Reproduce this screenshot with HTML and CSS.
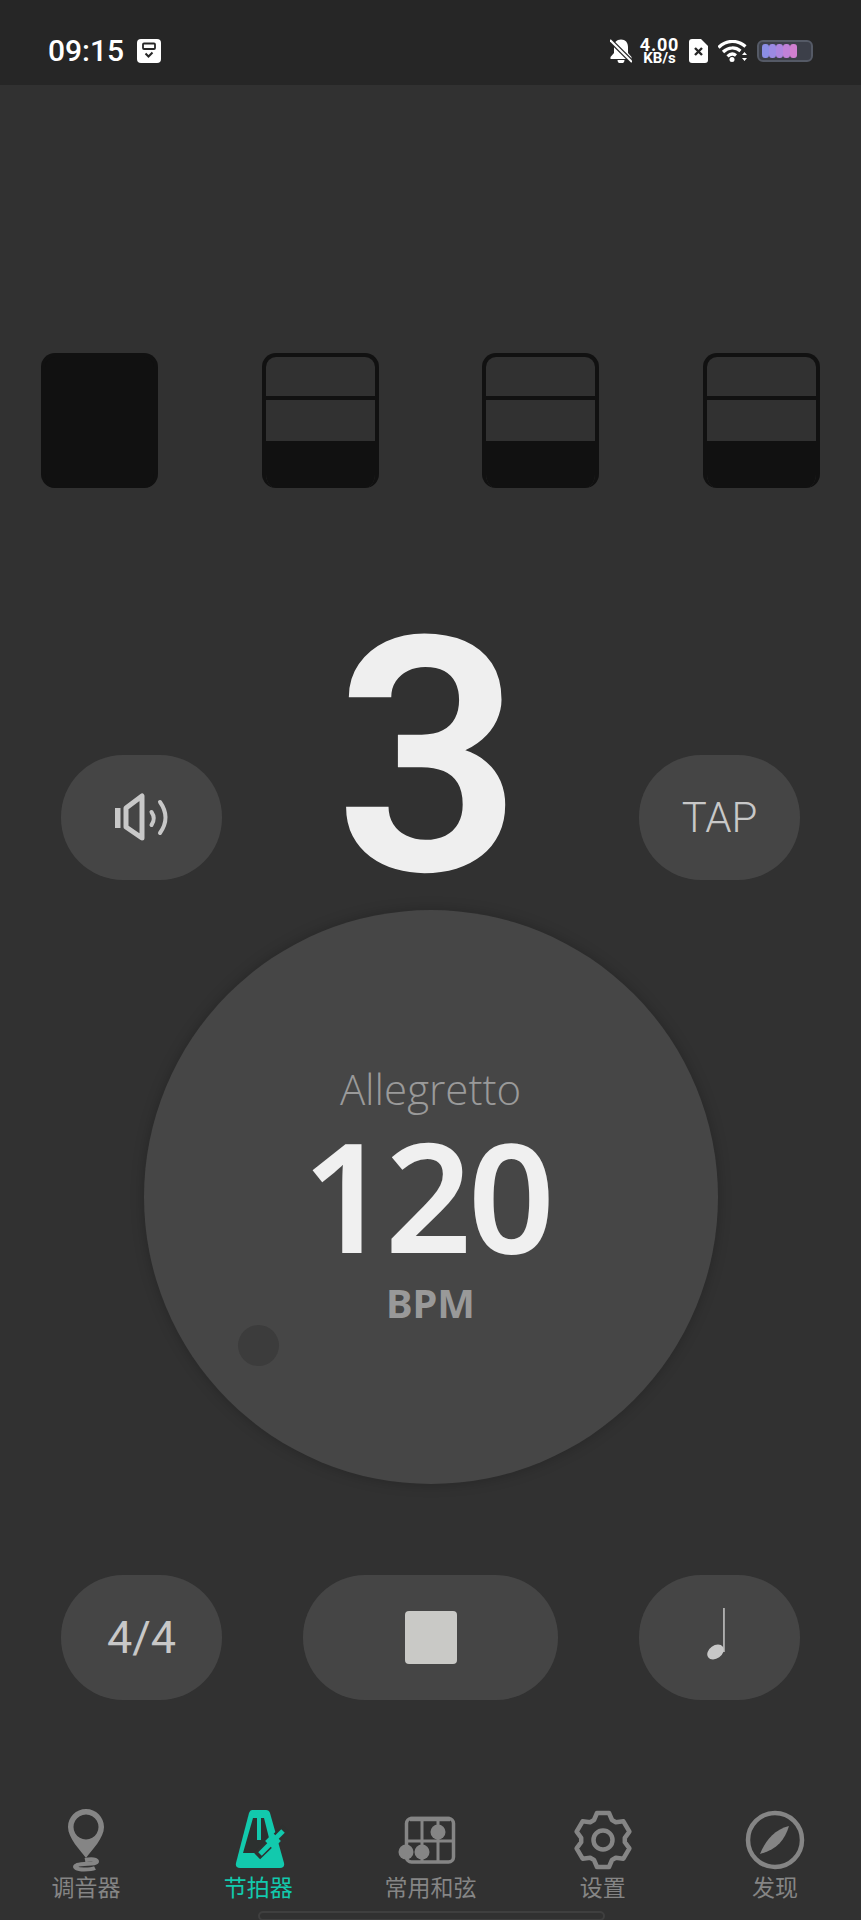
FILE: index.html
```html
<!DOCTYPE html>
<html lang="zh-CN">
<head>
  <meta charset="UTF-8">
  <title>节拍器</title>
  <link rel="stylesheet" href="styles.css">
</head>
<body>

<div class="status-bar">
  <div class="status-left">
    <span class="clock">09:15</span>
    <svg class="ic-cal" viewBox="0 0 24 24">
      <rect width="24" height="24" rx="4" fill="#fff"/>
      <rect x="6" y="4.500" width="12" height="5.500" rx="1" fill="none" stroke="#262626" stroke-width="1.800"/>
      <path d="M8.500 14.500l3 3 4-4" fill="none" stroke="#262626" stroke-width="2"/>
    </svg>
  </div>
  <div class="status-right">
    <svg class="ic-bell" viewBox="0 0 22 24">
      <path d="M11 0.500c-4.500 0-7 3-7 7.500v6L0.500 18v2h21v-2L18 14V8C18 3.500 15.500 0.500 11 0.500z" fill="#fff"/>
      <path d="M7.500 21h7a3.500 3.500 0 0 1-7 0z" fill="#fff"/>
      <path d="M-1 0L22 23" stroke="#262626" stroke-width="4.500"/>
      <path d="M0 1L22 23" stroke="#fff" stroke-width="2.200"/>
    </svg>
    <div class="speed">
      <span class="speed-num">4.00</span>
      <span class="speed-unit">KB/s</span>
    </div>
    <svg class="ic-sim" viewBox="0 0 19 24">
      <path d="M3 0h9l7 7v14a3 3 0 0 1-3 3H3a3 3 0 0 1-3-3V3a3 3 0 0 1 3-3z" fill="#fff"/>
      <path d="M6 9l7 7M13 9l-7 7" stroke="#262626" stroke-width="2.400"/>
    </svg>
    <svg class="ic-wifi" viewBox="0 0 29 22">
      <g fill="none" stroke="#fff" stroke-width="3.200">
        <path d="M0.500 7.500C8.500 -0.500 19.500 -0.500 27.500 6.500"/>
        <path d="M5 12C10.500 6.800 17.500 6.800 22.500 11"/>
        <path d="M9.500 16.300C12.500 13.500 15.500 13.500 18 15.500"/>
      </g>
      <circle cx="14" cy="19.500" r="2.500" fill="#fff"/>
      <path d="M24 15l2.500-3 2.500 3zM24 18l2.500 3 2.500-3z" fill="#fff"/>
    </svg>
    <div class="battery">
      <span class="cell c1"></span>
      <span class="cell c2"></span>
      <span class="cell c3"></span>
      <span class="cell c4"></span>
      <span class="cell c5"></span>
    </div>
  </div>
</div>

<div class="beats">
  <div class="beat full"></div>
  <div class="beat"><div class="beat-line"></div><div class="beat-fill"></div></div>
  <div class="beat"><div class="beat-line"></div><div class="beat-fill"></div></div>
  <div class="beat"><div class="beat-line"></div><div class="beat-fill"></div></div>
</div>

<div class="count-row">
  <div class="pill">
    <svg class="ic-speaker" viewBox="0 0 85 65">
      <rect x="15" y="23" width="5.500" height="20" fill="#c8c8c8"/>
      <g fill="none" stroke="#c8c8c8" stroke-linejoin="round" stroke-linecap="round">
        <path d="M26 23L42 11V53L26 42Z" stroke-width="5"/>
        <path d="M51.500 27Q56 33.500 51.500 40" stroke-width="4"/>
        <path d="M60 17Q71 32.500 60 48" stroke-width="4"/>
      </g>
    </svg>
  </div>
  <div class="count">3</div>
  <div class="pill pill-text">TAP</div>
</div>

<div class="dial">
  <div class="tempo-name">Allegretto</div>
  <div class="tempo-num">120</div>
  <div class="tempo-unit">BPM</div>
  <div class="dial-dot"></div>
</div>

<div class="controls">
  <div class="pill pill-text pill-meter">4/4</div>
  <div class="pill pill-wide"><div class="stop"></div></div>
  <div class="pill">
    <svg class="ic-note" viewBox="0 0 20 52">
      <rect x="17.200" y="0" width="1.500" height="44" fill="#c8c8c8"/>
      <ellipse cx="9.500" cy="44" rx="9" ry="6.500" transform="rotate(-35 9.500 44)" fill="#c8c8c8"/>
    </svg>
  </div>
</div>

<div class="nav">
  <div class="nav-item">
    <svg class="nav-icon" viewBox="0 0 64 64">
      <path fill-rule="evenodd" d="M32 1C22 1 14 9 14 19C14 30 26 42 32 50C38 42 50 30 50 19C50 9 42 1 32 1ZM32 6.500a12.500 12.500 0 1 0 .01 0Z" fill="#858585"/>
      <path d="M31 52C38 50.500 43 51.500 43 53.500C43 56.500 30 55 23 57C18 59 23 61.500 30 61.500C36 61.500 39 61 41 60" fill="none" stroke="#858585" stroke-width="4"/>
    </svg>
    <span class="nav-label">调音器</span>
  </div>
  <div class="nav-item active">
    <svg class="nav-icon" viewBox="0 0 64 64">
      <path d="M26 2H40Q43 2 44 5L58 55Q59 60 54 60H14Q9 60 10 55L23 5Q24 2 26 2Z" fill="#12c9ad"/>
      <path d="M27 10H38L43 30L32 45H17Z" fill="#2c302f"/>
      <rect x="31" y="10" width="4" height="22" fill="#12c9ad"/>
      <path d="M31 48L60 20" stroke="#2f3130" stroke-width="9"/>
      <path d="M34 46L57 23" stroke="#12c9ad" stroke-width="5"/>
      <path d="M43 37L51 29" stroke="#12c9ad" stroke-width="11"/>
    </svg>
    <span class="nav-label">节拍器</span>
  </div>
  <div class="nav-item">
    <svg class="nav-icon" viewBox="0 0 64 64">
      <rect x="8.500" y="10.500" width="47" height="43.500" rx="5" fill="none" stroke="#858585" stroke-width="3.500"/>
      <path d="M12 11H52" stroke="#858585" stroke-width="4.500"/>
      <path d="M24 10V54M40 10V54M8 33H56" stroke="#858585" stroke-width="3"/>
      <circle cx="40" cy="24" r="7.500" fill="#858585"/>
      <circle cx="8" cy="44" r="7.500" fill="#858585"/>
      <circle cx="24" cy="44" r="7.500" fill="#858585"/>
    </svg>
    <span class="nav-label">常用和弦</span>
  </div>
  <div class="nav-item">
    <svg class="nav-icon" viewBox="0 0 64 64">
      <path d="M23 12L26 5H38L41 12L44.800 14.200L52.400 13.300L58.400 23.700L53.800 29.800V34.200L58.400 40.300L52.400 50.700L44.800 49.800L41 52L38 59H26L23 52L19.200 49.800L11.600 50.700L5.600 40.300L10.200 34.200V29.800L5.600 23.700L11.600 13.300L19.200 14.200Z" fill="none" stroke="#858585" stroke-width="4.500" stroke-linejoin="round"/>
      <circle cx="32" cy="32" r="9.500" fill="none" stroke="#858585" stroke-width="4.500"/>
    </svg>
    <span class="nav-label">设置</span>
  </div>
  <div class="nav-item">
    <svg class="nav-icon" viewBox="0 0 64 64">
      <circle cx="32" cy="32" r="27" fill="none" stroke="#858585" stroke-width="4.500"/>
      <path d="M46 18C30 22 22 34 17 46C33 42 42 32 46 18Z" fill="#858585"/>
    </svg>
    <span class="nav-label">发现</span>
  </div>
</div>

<div class="home-bar"></div>

</body>
</html>
```

FILE: styles.css
```css
body {
  margin: 0;
  width: 861px;
  height: 1920px;
  overflow: hidden;
  background-color: #313131;
  font-family: Roboto, "Noto Sans CJK SC", sans-serif;
}

/* status bar */
.status-bar {
  display: flex;
  justify-content: space-between;
  height: 24px;
  padding: 39px 48px 22px;
  background-color: #262626;
}
.status-left, .status-right {
  display: flex;
  align-items: center;
}
.status-right {
  gap: 10px;
}
.clock {
  color: #fff;
  font-size: 30px;
  font-weight: 500;
  line-height: 24px;
}
.ic-cal {
  width: 24px;
  height: 24px;
  margin-left: 13px;
}
.ic-bell {
  width: 22px;
  height: 24px;
}
.speed {
  display: flex;
  flex-direction: column;
  align-items: center;
  width: 39px;
  margin-left: -2px;
  color: #fff;
  font-weight: 700;
}
.speed-num {
  font-size: 18px;
  line-height: 15px;
  letter-spacing: 0.8px;
}
.speed-unit {
  font-size: 15px;
  line-height: 13px;
}
.ic-sim {
  width: 19px;
  height: 24px;
}
.ic-wifi {
  width: 29px;
  height: 22px;
}
.battery {
  display: flex;
  box-sizing: border-box;
  width: 56px;
  height: 22px;
  padding: 2px 3px;
  border: 2px solid #555a66;
  border-radius: 6px;
  background-color: #3c3f49;
}
.cell {
  width: 7px;
  border-radius: 3px;
}
.c1 { background-color: #8b8ee6; }
.c2 { background-color: #9c8ae4; }
.c3 { background-color: #ad85df; }
.c4 { background-color: #c081d8; }
.c5 { background-color: #d07fd0; }

/* beat cards */
.beats {
  display: flex;
  justify-content: space-between;
  margin: 268px 41px 0;
}
.beat {
  display: flex;
  flex-direction: column;
  box-sizing: border-box;
  width: 117px;
  height: 135px;
  border: 4px solid #111;
  border-bottom: 0;
  border-radius: 14px;
  overflow: hidden;
}
.beat.full {
  background-color: #111;
}
.beat-line {
  height: 4px;
  margin-top: 39px;
  background-color: #111;
}
.beat-fill {
  flex: 1;
  margin-top: 41px;
  background-color: #111;
}

/* pills */
.pill {
  display: flex;
  align-items: center;
  justify-content: center;
  width: 161px;
  height: 125px;
  border-radius: 62px;
  background-color: #454545;
}
.pill-text {
  color: #c8c8c8;
  font-size: 42px;
  font-weight: 300;
}
.pill-meter {
  font-size: 45px;
  font-weight: 400;
}
.pill-wide {
  width: 255px;
}

.count-row {
  display: flex;
  justify-content: space-between;
  align-items: flex-end;
  height: 260px;
  margin: 132px 61px 0;
}
.count {
  align-self: flex-start;
  margin: 8px 4px 0 0;
  color: #efefef;
  font-size: 328px;
  font-weight: 600;
  line-height: 260px;
}
.ic-speaker {
  width: 85px;
  height: 65px;
  margin-left: 2px;
}

/* tempo dial */
.dial {
  position: relative;
  display: flex;
  flex-direction: column;
  align-items: center;
  width: 574px;
  height: 574px;
  margin: 30px auto 0;
  border-radius: 50%;
  background-color: #464646;
  box-shadow: 0 0 14px rgba(0, 0, 0, 0.22);
}
.tempo-name {
  margin-top: 154px;
  color: #9a9a9a;
  font-family: "Open Sans", sans-serif;
  font-size: 42px;
  font-weight: 300;
  line-height: 50px;
}
.tempo-num {
  margin: 16px 8px 0 0;
  color: #f0f0f0;
  font-family: "Noto Sans", sans-serif;
  font-size: 152px;
  font-weight: 600;
  line-height: 130px;
  letter-spacing: -4px;
}
.tempo-unit {
  margin-top: 18px;
  color: #999;
  font-family: "Noto Sans", sans-serif;
  font-size: 40px;
  font-weight: 700;
  line-height: 50px;
}
.dial-dot {
  position: absolute;
  left: 94px;
  top: 415px;
  width: 41px;
  height: 41px;
  border-radius: 50%;
  background-color: #3c3c3c;
}

/* bottom controls */
.controls {
  display: flex;
  justify-content: space-between;
  margin: 91px 61px 0;
}
.stop {
  width: 52px;
  height: 53px;
  border-radius: 4px;
  background-color: #c9c9c6;
}
.ic-note {
  width: 20px;
  height: 52px;
  margin: 0 7px 8px 0;
}

/* tab bar */
.nav {
  display: grid;
  grid-template-columns: repeat(5, 1fr);
  margin-top: 108px;
}
.nav-item {
  display: flex;
  flex-direction: column;
  align-items: center;
  color: #858585;
}
.nav-item.active {
  color: #12c9ad;
}
.nav-icon {
  width: 64px;
  height: 64px;
}
.nav-label {
  margin-top: 2px;
  font-size: 23px;
  line-height: 30px;
}

.home-bar {
  box-sizing: border-box;
  width: 347px;
  height: 10px;
  margin: 7px 0 0 258px;
  border: 2px solid #3f3f3f;
  border-radius: 5px;
}
```
